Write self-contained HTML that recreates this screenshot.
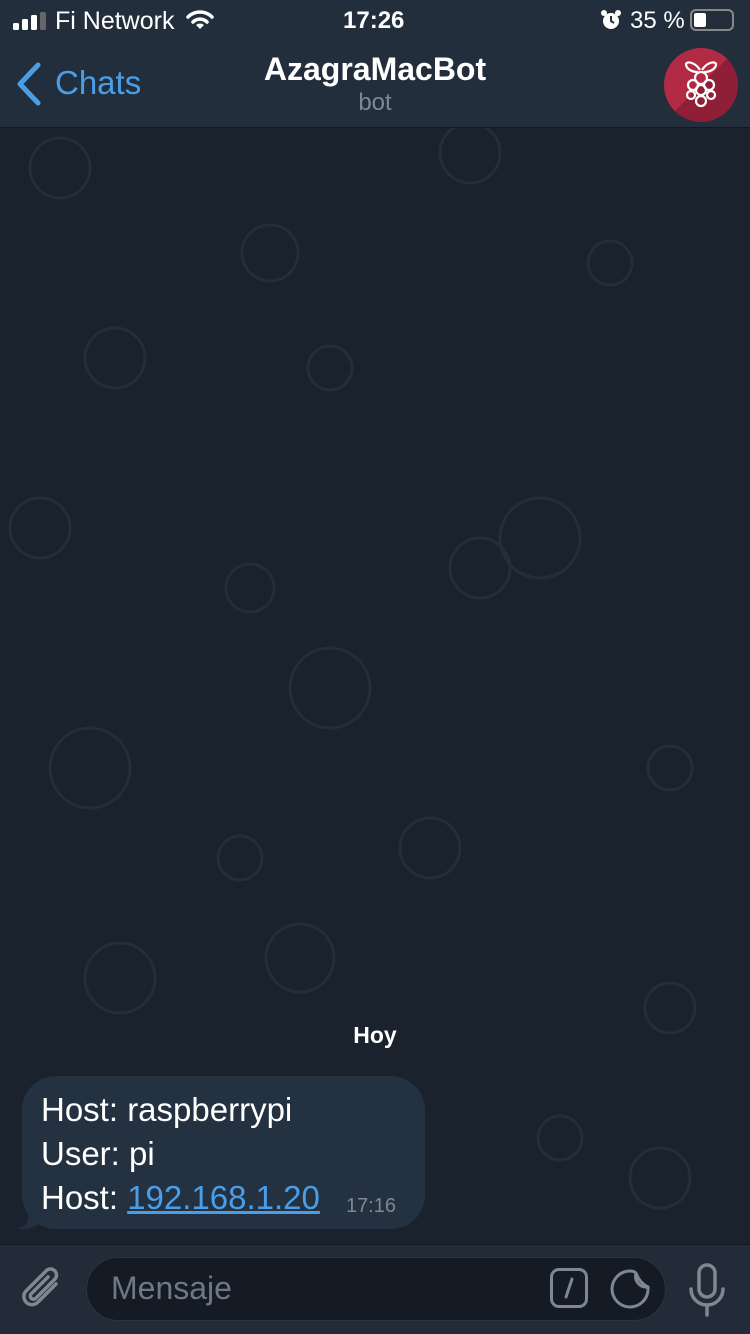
<!DOCTYPE html>
<html><head><meta charset="utf-8"><style>
*{margin:0;padding:0;box-sizing:border-box}
body{width:750px;height:1334px;overflow:hidden;background:#1a222d;font-family:"Liberation Sans",sans-serif;position:relative;color:#fff}
.hdr{position:absolute;left:0;top:0;width:750px;height:128px;background:#232e3c;border-bottom:1px solid #121820}
.abs{position:absolute;white-space:nowrap}
.bub{position:absolute;left:22px;top:1076px;width:403px;height:153px;background:#243140;border-radius:34px}
.bar{position:absolute;left:0;top:1244px;width:750px;height:90px;background:#222b38;border-top:1px solid #10161e}
.field{position:absolute;left:86px;top:1257px;width:580px;height:64px;background:#141b25;border-radius:32px;border:1px solid #2a3441}
</style></head><body>
<svg class="abs" style="left:0;top:128px" width="750" height="1116" stroke="#232d3b" stroke-width="3" fill="none">
<circle cx="115" cy="230" r="30"/><circle cx="250" cy="460" r="24"/><circle cx="540" cy="410" r="40"/><circle cx="670" cy="640" r="22"/>
<circle cx="330" cy="240" r="22"/><circle cx="90" cy="640" r="40"/><circle cx="430" cy="720" r="30"/><circle cx="240" cy="730" r="22"/>
<circle cx="670" cy="880" r="25"/><circle cx="560" cy="1010" r="22"/><circle cx="120" cy="850" r="35"/><circle cx="300" cy="830" r="34"/>
<circle cx="610" cy="135" r="22"/><circle cx="470" cy="25" r="30"/><circle cx="60" cy="40" r="30"/><circle cx="270" cy="125" r="28"/>
<circle cx="330" cy="560" r="40"/><circle cx="480" cy="440" r="30"/><circle cx="660" cy="1050" r="30"/><circle cx="40" cy="400" r="30"/>
</svg>
<div class="hdr"></div>
<svg class="abs" style="left:13px;top:12px" width="36" height="18"><rect x="0" y="11" width="6" height="7" rx="1.5" fill="#fff"/><rect x="9" y="7" width="6" height="11" rx="1.5" fill="#fff"/><rect x="18" y="3" width="6" height="15" rx="1.5" fill="#fff"/><rect x="27" y="0" width="6" height="18" rx="1.5" fill="#666"/></svg>
<div class="abs" style="left:55px;top:7px;font-size:25px">Fi Network</div>
<svg class="abs" style="left:186px;top:10px" width="28" height="20" viewBox="0 0 28 20"><path d="M2 7a17 17 0 0 1 24 0" stroke="#fff" stroke-width="3.5" fill="none" stroke-linecap="round"/><path d="M7 12a10 10 0 0 1 14 0" stroke="#fff" stroke-width="3.5" fill="none" stroke-linecap="round"/><path d="M14 19l-4-4a6 6 0 0 1 8 0z" fill="#fff"/></svg>
<div class="abs" style="left:343px;top:7px;font-size:24px;font-weight:bold">17:26</div>
<svg class="abs" style="left:600px;top:9px" width="22" height="22"><circle cx="11" cy="12" r="8" fill="#fff"/><circle cx="4" cy="4" r="3" fill="#fff"/><circle cx="18" cy="4" r="3" fill="#fff"/><path d="M11 7v5l3 2" stroke="#232e3c" stroke-width="2" fill="none"/></svg>
<div class="abs" style="left:630px;top:7px;font-size:24px">35 %</div>
<div class="abs" style="left:690px;top:9px;width:44px;height:22px;border:2px solid #888;border-radius:6px"><div style="position:absolute;left:2px;top:2px;width:12px;height:14px;background:#fff;border-radius:2px"></div></div>
<svg class="abs" style="left:14px;top:62px" width="28" height="44"><path d="M24 3L6 22l18 19" stroke="#4a9ee8" stroke-width="5" fill="none" stroke-linecap="round" stroke-linejoin="round"/></svg>
<div class="abs" style="left:55px;top:64px;font-size:33px;color:#4a9ee8">Chats</div>
<div class="abs" style="left:0;width:750px;top:51px;text-align:center;font-size:32px;font-weight:bold">AzagraMacBot</div>
<div class="abs" style="left:0;width:750px;top:89px;text-align:center;font-size:24px;color:#7d8892">bot</div>
<div class="abs" style="left:664px;top:48px;width:74px;height:74px;border-radius:50%;background:linear-gradient(135deg,#b32a45 50%,#8f1f36 50%)"></div>
<svg class="abs" style="left:683px;top:58px" width="36" height="52" viewBox="0 0 36 52" fill="none" stroke="#fff" stroke-width="2.2"><path d="M17 12C12 4 4 3 3 6c0 5 6 8 12 8M19 12c5-8 13-9 14-6 0 5-6 8-12 8"/><circle cx="18" cy="20" r="6"/><circle cx="10" cy="27" r="5"/><circle cx="26" cy="27" r="5"/><circle cx="18" cy="32" r="5"/><circle cx="8" cy="37" r="4"/><circle cx="28" cy="37" r="4"/><circle cx="18" cy="43" r="5"/></svg>
<div class="abs" style="left:0;width:750px;top:1022px;text-align:center;font-size:23px;font-weight:bold">Hoy</div>
<svg class="abs" style="left:14px;top:1190px" width="30" height="40"><path d="M14 0v28c0 5-4 9-10 11 9 1 17-2 22-6z" fill="#243140"/></svg>
<div class="bub"></div>
<div class="abs" style="left:41px;top:1088px;font-size:33px;line-height:44px">Host: raspberrypi<br>User: pi<br>Host: <span style="color:#4a9ee8;text-decoration:underline">192.168.1.20</span></div>
<div class="abs" style="left:346px;top:1195px;font-size:20px;color:#7d8892">17:16</div>
<div class="bar"></div>
<svg class="abs" style="left:20px;top:1262px" width="46" height="52" viewBox="0 0 46 52"><path d="M36 22L18 40a8 8 0 0 1-12-11L26 9a6 6 0 0 1 9 8L16 36a3 3 0 0 1-5-4L28 15" stroke="#7d8892" stroke-width="3.5" fill="none" stroke-linecap="round"/></svg>
<div class="field"></div>
<div class="abs" style="left:111px;top:1270px;font-size:32px;color:#6e7983">Mensaje</div>
<div class="abs" style="left:550px;top:1268px;width:38px;height:40px;border:3px solid #7d8892;border-radius:9px"></div>
<svg class="abs" style="left:550px;top:1268px" width="38" height="40"><path d="M22 11l-6 18" stroke="#7d8892" stroke-width="3" stroke-linecap="round"/></svg>
<svg class="abs" style="left:608px;top:1266px" width="46" height="46" viewBox="0 0 46 46" fill="none" stroke="#7d8892" stroke-width="3"><path d="M40 24A18 18 0 1 1 22 5c3 0 5 1 6 2 2 6 6 11 12 14z"/><path d="M28 7c-2 7 3 15 12 14"/></svg>
<svg class="abs" style="left:686px;top:1262px" width="42" height="56" viewBox="0 0 42 56" fill="none" stroke="#7d8892" stroke-width="3.5" stroke-linecap="round"><rect x="13" y="3" width="16" height="32" rx="8"/><path d="M5 27a16 16 0 0 0 32 0M21 43v10"/></svg>
</body></html>
